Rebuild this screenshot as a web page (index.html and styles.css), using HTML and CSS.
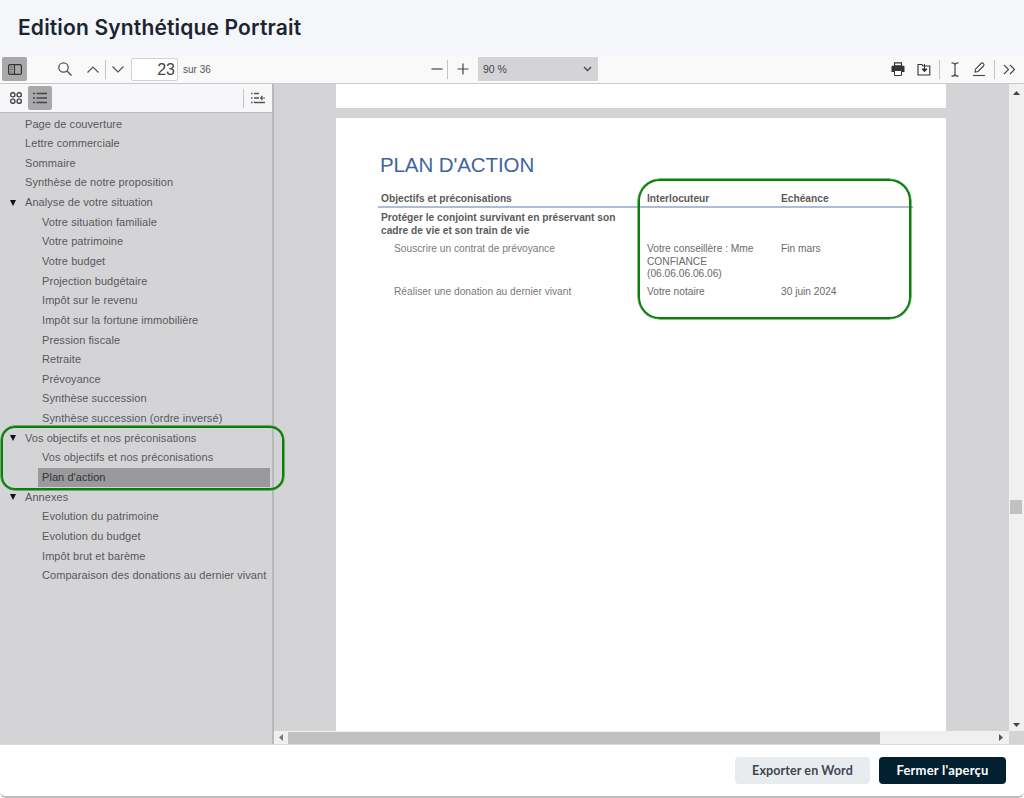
FILE: index.html
```html
<!DOCTYPE html>
<html lang="fr">
<head>
<meta charset="utf-8">
<title>Edition Synthétique Portrait</title>
<link rel="stylesheet" href="styles.css">
</head>
<body>
<div class="app">
  <header class="title-bar"><h1>Edition Synthétique Portrait</h1></header>
  <div class="toolbar">
    <button class="tool tool-toggle active"><svg width="14" height="11" viewBox="0 0 14 11"><rect x=".6" y=".6" width="12.800" height="9.800" rx="1.500" fill="none" stroke="#333" stroke-width="1.200"/><path d="M6.500 1v9" stroke="#333" stroke-width="1.200"/><path d="M2 3h3M2 5.500h3M2 8h3" stroke="#666"/></svg></button>
    <button class="tool tool-search"><svg width="16" height="16" viewBox="0 0 16 16"><circle cx="6.500" cy="6.500" r="4.700" fill="none" stroke="#555" stroke-width="1.300"/><path d="M10 10l4.500 4.500" stroke="#555" stroke-width="1.500"/></svg></button>
    <button class="tool tool-nav tool-up"><svg width="14" height="9" viewBox="0 0 14 9"><path d="M1.500 7.500L7 2l5.500 5.500" fill="none" stroke="#555" stroke-width="1.200"/></svg></button>
    <span class="sep"></span>
    <button class="tool tool-nav"><svg width="14" height="9" viewBox="0 0 14 9"><path d="M1.500 1.500L7 7l5.500-5.500" fill="none" stroke="#555" stroke-width="1.200"/></svg></button>
    <span class="page-input">23</span>
    <span class="page-total">sur 36</span>
    <button class="tool tool-minus"><svg width="12" height="12" viewBox="0 0 12 12"><path d="M0.500 6h11" stroke="#444" stroke-width="1.200"/></svg></button>
    <span class="sep"></span>
    <button class="tool tool-plus"><svg width="12" height="12" viewBox="0 0 12 12"><path d="M0.500 6h11M6 .5v11" stroke="#444" stroke-width="1.200"/></svg></button>
    <div class="zoom-select"><span>90 %</span><svg width="9" height="6" viewBox="0 0 9 6"><path d="M1 1l3.500 3.500L8 1" fill="none" stroke="#444" stroke-width="1.300"/></svg></div>
    <div class="tools-right">
      <button class="tool tool-r"><svg width="14" height="14" viewBox="0 0 14 14"><path d="M3.500 0.800h7v3h-7z" fill="#fff" stroke="#333" stroke-width="1.200"/><path d="M1.500 3.800h11a1 1 0 0 1 1 1v5.200h-3v-2h-7v2h-3V4.800a1 1 0 0 1 1-1z" fill="#333"/><path d="M3.500 8.500h7v5h-7z" fill="#fff" stroke="#333" stroke-width="1"/></svg></button>
      <button class="tool tool-r"><svg width="14" height="13" viewBox="0 0 14 13"><path d="M1 1.500h4l1 1.500h6.800v9H1z" fill="none" stroke="#333" stroke-width="1.100"/><path d="M7.500 1v7M5 6l2.500 2.800L10 6z" fill="#333" stroke="#333"/></svg></button>
      <span class="sep"></span>
      <button class="tool tool-cursor"><svg width="10" height="15" viewBox="0 0 10 15"><path d="M1.500 .8c2 0 3.500.4 3.500 2v9.400c0 1.600-1.500 2-3.500 2M8.500 .8c-2 0-3.500.4-3.500 2M8.500 14.200c-2 0-3.500-.4-3.500-2" fill="none" stroke="#444" stroke-width="1.200"/></svg></button>
      <button class="tool tool-pen"><svg width="14" height="15" viewBox="0 0 14 15"><path d="M3 10l.5-2.800L9 1.500c.8-.8 1.800-.8 2.500 0s.7 1.700 0 2.500L6 9.500z" fill="none" stroke="#444" stroke-width="1.100"/><path d="M1 13.500h12" stroke="#444" stroke-width="1.100"/></svg></button>
      <span class="sep"></span>
      <button class="tool tool-more"><svg width="13" height="11" viewBox="0 0 13 11"><path d="M1 1l4.500 4.500L1 10M7 1l4.500 4.500L7 10" fill="none" stroke="#444" stroke-width="1.100"/></svg></button>
    </div>
  </div>
  <div class="workspace">
    <aside class="sidebar">
      <div class="side-tools">
        <button class="side-btn"><svg width="12" height="12" viewBox="0 0 12 12"><g fill="none" stroke="#444" stroke-width="1.400"><rect x=".7" y=".7" width="4.200" height="4.200" rx="1.800"/><rect x="7.100" y=".7" width="4.200" height="4.200" rx="1.800"/><rect x=".7" y="7.100" width="4.200" height="4.200" rx="1.800"/><rect x="7.100" y="7.100" width="4.200" height="4.200" rx="1.800"/></g></svg></button>
        <button class="side-btn active"><svg width="14" height="12" viewBox="0 0 14 12"><path d="M3.500 1.500h10.500M3.500 6h10.500M3.500 10.500h10.500M0 1.500h2M0 6h2M0 10.500h2" stroke="#444" stroke-width="1.500"/></svg></button>
        <span class="side-sep"></span>
        <button class="side-btn side-last"><svg width="14" height="13" viewBox="0 0 14 13"><path d="M0 1.500h1.500M3 1.500h5M0 6h1.500M3 6h5M0 10.500h1.500M3 10.500h11" stroke="#555" stroke-width="1.400"/><path d="M9.500 6H14M11.500 4l-2 2 2 2" fill="none" stroke="#555" stroke-width="1.100"/></svg></button>
      </div>
      <ul class="tree">
        <li class="l1">Page de couverture</li>
        <li class="l1">Lettre commerciale</li>
        <li class="l1">Sommaire</li>
        <li class="l1">Synthèse de notre proposition</li>
        <li class="l1 open">Analyse de votre situation</li>
        <li class="l2">Votre situation familiale</li>
        <li class="l2">Votre patrimoine</li>
        <li class="l2">Votre budget</li>
        <li class="l2">Projection budgétaire</li>
        <li class="l2">Impôt sur le revenu</li>
        <li class="l2">Impôt sur la fortune immobilière</li>
        <li class="l2">Pression fiscale</li>
        <li class="l2">Retraite</li>
        <li class="l2">Prévoyance</li>
        <li class="l2">Synthèse succession</li>
        <li class="l2">Synthèse succession (ordre inversé)</li>
        <li class="l1 open">Vos objectifs et nos préconisations</li>
        <li class="l2">Vos objectifs et nos préconisations</li>
        <li class="l2 selected"><span>Plan d'action</span></li>
        <li class="l1 open">Annexes</li>
        <li class="l2">Evolution du patrimoine</li>
        <li class="l2">Evolution du budget</li>
        <li class="l2">Impôt brut et barème</li>
        <li class="l2">Comparaison des donations au dernier vivant</li>
      </ul>
    </aside>
    <main class="viewer">
      <div class="viewer-row">
        <div class="pages">
          <div class="page page-prev"></div>
          <div class="page page-current">
            <h2>PLAN D'ACTION</h2>
            <div class="plan-table">
              <div class="plan-head"><span>Objectifs et préconisations</span><span>Interlocuteur</span><span>Echéance</span></div>
              <div class="plan-goal">Protéger le conjoint survivant en préservant son cadre de vie et son train de vie</div>
              <div class="plan-row"><span class="plan-act">Souscrire un contrat de prévoyance</span><span>Votre conseillère : Mme CONFIANCE (06.06.06.06.06)</span><span>Fin mars</span></div>
              <div class="plan-row"><span class="plan-act">Réaliser une donation au dernier vivant</span><span>Votre notaire</span><span>30 juin 2024</span></div>
            </div>
          </div>
        </div>
        <div class="vscroll">
          <svg class="arrow" width="7" height="4" viewBox="0 0 7 4"><path d="M3.500 0L7 4H0z" fill="#444"/></svg>
          <span class="vthumb"></span>
          <svg class="arrow" width="7" height="4" viewBox="0 0 7 4"><path d="M3.500 4L7 0H0z" fill="#444"/></svg>
        </div>
      </div>
      <div class="hscroll">
        <svg class="harrow-l" width="4" height="7" viewBox="0 0 4 7"><path d="M0 3.500L4 0v7z" fill="#777"/></svg>
        <span class="hthumb"></span>
        <svg class="harrow-r" width="4" height="7" viewBox="0 0 4 7"><path d="M4 3.500L0 0v7z" fill="#555"/></svg>
        <span class="corner"></span>
      </div>
    </main>
  </div>
  <footer class="footer">
    <button class="btn btn-light">Exporter en Word</button>
    <button class="btn btn-dark">Fermer l'aperçu</button>
  </footer>
  <div class="mark mark-side"></div>
  <div class="mark mark-table"></div>
</div>
</body>
</html>
```
FILE: styles.css
```css
* { box-sizing: border-box; }
html, body { margin: 0; height: 100%; }
body { background: #fff; font-family: "Liberation Sans", Arial, sans-serif; overflow: hidden; }
button { border: 0; background: none; padding: 0; margin: 0; font: inherit; display: flex; align-items: center; justify-content: center; }
ul { list-style: none; margin: 0; padding: 0; }

.app { position: relative; width: 1024px; height: 798px; display: flex; flex-direction: column; }

.title-bar { height: 55px; flex: none; background: #f5f6f9; padding: 14px 0 0 18px; }
.title-bar h1 { margin: 0; font: 600 21px/27px Inter, sans-serif; color: #1b2433; letter-spacing: .16px; }

.toolbar { height: 29px; flex: none; display: flex; align-items: center; background: #f9f9fa; border-bottom: 1px solid #c9c9cc; padding-left: 2px; }
.tool { height: 24px; }
.tool-toggle { width: 25px; background: #a9a9ab; border-radius: 2px; }
.tool-search { width: 24px; margin-left: 26px; }
.tool-nav { width: 24px; }
.tool-up { margin-left: 4px; }
.sep { width: 1px; height: 19px; background: #c4c4c6; flex: none; }
.page-input { width: 47px; height: 23px; margin-left: 1px; background: #fff; border: 1px solid #d2d2d4; border-radius: 2px; font-size: 16px; line-height: 22px; text-align: right; padding-right: 2px; color: #444; }
.page-total { font-size: 10px; color: #555; margin-left: 5px; width: 28px; white-space: nowrap; }
.tool-minus { width: 20px; margin-left: 216px; }
.tool-plus { width: 30px; }
.zoom-select { width: 120px; height: 24px; background: #d4d4d7; display: flex; align-items: center; justify-content: space-between; padding: 0 6px 0 5px; font-size: 10.500px; color: #444; }
.tools-right { margin-left: auto; display: flex; align-items: center; padding-right: 1px; }
.tool-r { width: 26px; }
.tool-r + .sep { margin-left: 2px; }
.tool-cursor { width: 30px; }
.tool-pen { width: 18px; margin-right: 6px; }
.tool-more { width: 28px; }

.workspace { flex: 1; min-height: 0; display: flex; }
.sidebar { width: 274px; flex: none; background: #d4d4d7; border-right: 2px solid #b9b9bb; display: flex; flex-direction: column; }
.side-tools { height: 29px; flex: none; display: flex; align-items: center; background: #f7f7f9; border-bottom: 1px solid #b9b9bb; padding-left: 4px; }
.side-btn { width: 24px; height: 24px; border-radius: 2px; }
.side-btn.active { background: #a9a9ab; }
.side-sep { width: 1px; height: 19px; background: #c4c4c6; margin-left: auto; }
.side-last { width: 28px; }

.tree { font-size: 11px; color: #58585a; letter-spacing: .07px; padding-top: 1.500px; }
.tree li { height: 19.650px; line-height: 19.650px; white-space: nowrap; position: relative; }
.l1 { padding-left: 25px; }
.l2 { padding-left: 42px; }
.open::before { content: ""; position: absolute; left: 9.500px; top: 6.500px; border-left: 3.500px solid transparent; border-right: 3.500px solid transparent; border-top: 6px solid #111; }
.tree .selected { padding-left: 38px; }
.selected span { display: block; height: 19px; width: 232px; padding-left: 4px; line-height: 19px; background: #9a9a9c; color: #333; }

.viewer { flex: 1; min-width: 0; display: flex; flex-direction: column; background: #d4d4d7; }
.viewer-row { flex: 1; min-height: 0; display: flex; }
.pages { flex: 1; min-width: 0; padding-left: 62px; overflow: hidden; display: flex; flex-direction: column; gap: 10px; }
.page { width: 610px; background: #fff; flex: none; }
.page-prev { height: 24px; }
.page-current { flex: 1; padding: 35px 33px 0 44px; }
.page-current h2 { margin: 0; font: 400 20.500px/24px "Liberation Sans", Arial, sans-serif; color: #3f64a0; letter-spacing: -.1px; }

.plan-table { margin-top: 14px; margin-left: -2px; font-size: 10.200px; line-height: 12.700px; color: #666; }
.plan-head, .plan-row { display: grid; grid-template-columns: 266px 134px 1fr; }
.plan-head { border-bottom: 2px solid #adbdd8; padding: 1px 0 2px 3px; font-weight: 700; color: #5a5a5a; height: 17px; line-height: 13px; }
.plan-goal { padding: 4px 0 0 3px; width: 250px; font-weight: 700; color: #5a5a5a; height: 35px; }
.plan-row { padding: 0 0 0 3px; color: #6a6a6a; }
.plan-row span:not(.plan-act) { padding-right: 4px; }
.plan-row + .plan-row { margin-top: 5px; }
.plan-act { padding-left: 13px; color: #7a7a7a; }

.vscroll { width: 15px; flex: none; background: #f0f0f0; position: relative; display: flex; flex-direction: column; align-items: center; justify-content: space-between; padding: 7px 0 4px; }
.vthumb { position: absolute; left: 1px; top: 416px; width: 12px; height: 14px; background: #c1c1c1; }

.hscroll { height: 13px; flex: none; background: #f0f0f0; display: flex; align-items: center; position: relative; }
.harrow-l { margin-left: 5px; }
.hthumb { height: 12px; width: 592px; margin-left: 5px; background: #c1c1c1; }
.harrow-r { margin-left: 119px; }
.corner { width: 15px; height: 13px; margin-left: auto; background: #d4d4d7; }

.footer { height: 54px; flex: none; background: #fff; border-top: 1px solid #dcdcdc; border-bottom: 2px solid #bdbdbd; border-radius: 0 0 6px 6px; display: flex; justify-content: flex-end; align-items: flex-start; gap: 9px; padding: 12px 18px 0 0; }
.btn { height: 27px; border-radius: 4px; font: 700 13px/27px Lato, sans-serif; letter-spacing: .1px; }
.btn-light { width: 135px; background: #e9ecef; color: #3f4650; font-size: 12.500px; }
.btn-dark { width: 127px; background: #02202f; color: #fff; letter-spacing: .2px; }

.mark { position: absolute; border: 2px solid #0b7f0b; box-shadow: 0 0 .5px .5px #0b7f0b; pointer-events: none; }
.mark-side { left: 1px; top: 426px; width: 283px; height: 64px; border-radius: 14px; }
.mark-table { left: 638px; top: 179px; width: 273px; height: 140px; border-radius: 22px; }
```
